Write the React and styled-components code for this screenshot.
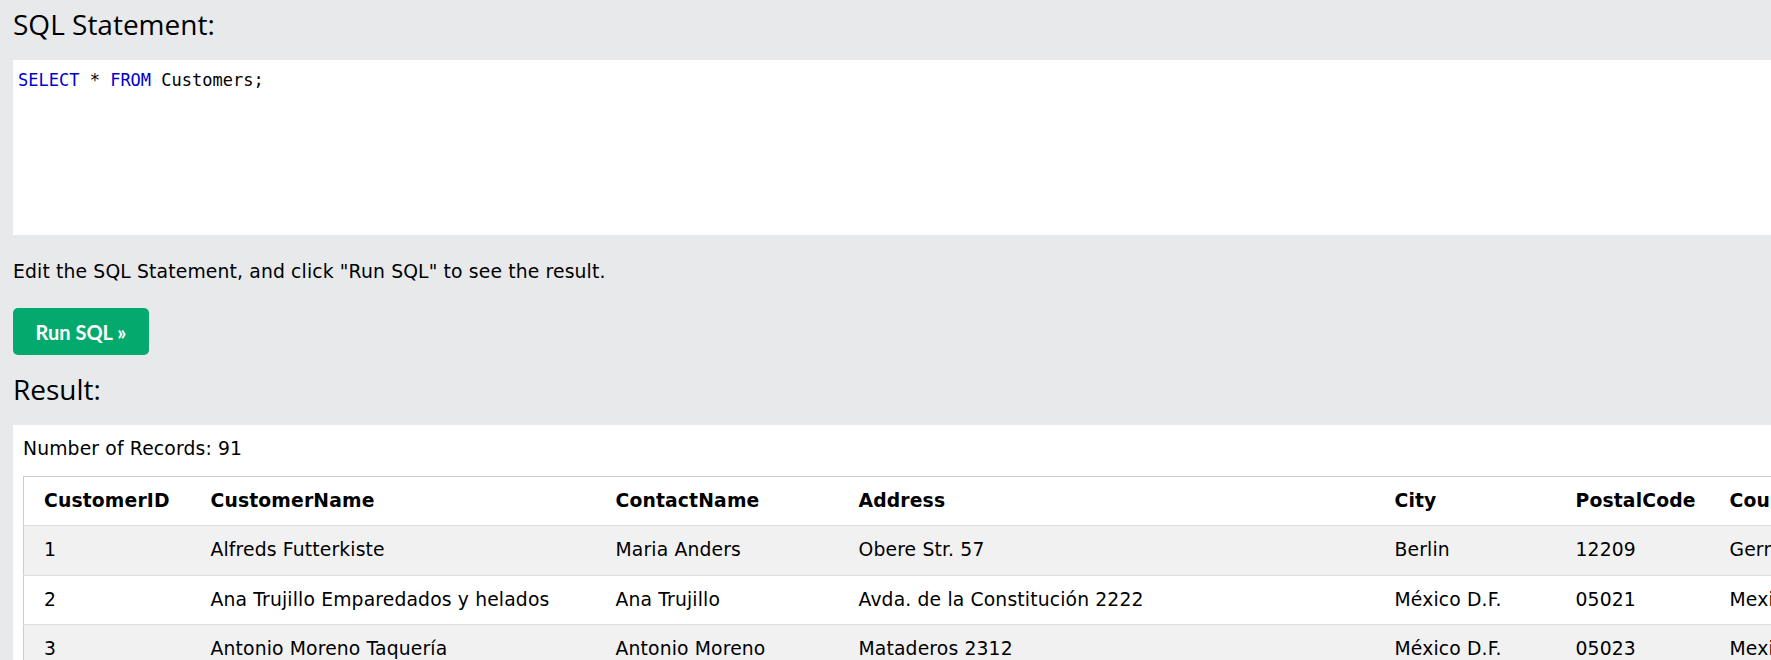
import React from "react";
import styled, { createGlobalStyle } from "styled-components";

const GlobalStyle = createGlobalStyle`
  html, body {
    margin: 0;
    padding: 0;
    background-color: #E7E9EB;
    overflow: hidden;
  }
  body {
    font-family: Verdana, "DejaVu Sans", sans-serif;
    font-size: 18.75px;
    line-height: 1.5;
    letter-spacing: 0.15px;
    color: #000;
  }
`;

const columns = [
  { name: "CustomerID", width: 177 },
  { name: "CustomerName", width: 405 },
  { name: "ContactName", width: 243 },
  { name: "Address", width: 536 },
  { name: "City", width: 181 },
  { name: "PostalCode", width: 154 },
  { name: "Country", width: 160 },
];

const rows = [
  ["1", "Alfreds Futterkiste", "Maria Anders", "Obere Str. 57", "Berlin", "12209", "Germany"],
  ["2", "Ana Trujillo Emparedados y helados", "Ana Trujillo", "Avda. de la Constitución 2222", "México D.F.", "05021", "Mexico"],
  ["3", "Antonio Moreno Taquería", "Antonio Moreno", "Mataderos 2312", "México D.F.", "05023", "Mexico"],
  ["4", "Around the Horn", "Thomas Hardy", "120 Hanover Sq.", "London", "WA1 1DP", "UK"],
  ["5", "Berglunds snabbköp", "Christina Berglund", "Berguvsvägen 8", "Luleå", "S-958 22", "Sweden"],
];

export default function App() {
  const tableWidth = columns.reduce((sum, c) => sum + c.width, 0);
  return (
    <>
      <GlobalStyle />
      <Page>
        <Heading>SQL Statement:</Heading>
        <CodeBox>
          <CodeLine>
            <Keyword>SELECT</Keyword> * <Keyword>FROM</Keyword> Customers;
          </CodeLine>
        </CodeBox>
        <Hint>Edit the SQL Statement, and click "Run SQL" to see the result.</Hint>
        <RunButton type="button">Run SQL »</RunButton>
        <Heading $top={20}>Result:</Heading>
        <ResultBox>
          <RecordCount>Number of Records: 91</RecordCount>
          <Table style={{ width: tableWidth }}>
            <colgroup>
              {columns.map((c) => (
                <col key={c.name} style={{ width: c.width }} />
              ))}
            </colgroup>
            <thead>
              <Row>
                {columns.map((c) => (
                  <HeadCell key={c.name}>{c.name}</HeadCell>
                ))}
              </Row>
            </thead>
            <tbody>
              {rows.map((r, i) => (
                <Row key={r[0]} $striped={i % 2 === 0}>
                  {r.map((v, j) => (
                    <Cell key={j}>{v}</Cell>
                  ))}
                </Row>
              ))}
            </tbody>
          </Table>
        </ResultBox>
      </Page>
    </>
  );
}

const Page = styled.div`
  width: 2000px;
  padding-left: 13px;
  box-sizing: border-box;
`;

const Heading = styled.h3`
  margin: ${(p) => p.$top || 10}px 0 21px 0;
  font-family: "Open Sans", "Segoe UI", sans-serif;
  font-weight: 400;
  font-size: 28px;
  line-height: 29px;
  letter-spacing: 0;
  color: #000;
`;

const CodeBox = styled.div`
  height: 175px;
  background-color: #fff;
  padding: 10px 5px;
  box-sizing: border-box;
`;

const CodeLine = styled.div`
  font-family: "DejaVu Sans Mono", "Liberation Mono", monospace;
  font-size: 17px;
  line-height: 20.5px;
  letter-spacing: 0;
  color: #000;
  white-space: pre;
`;

const Keyword = styled.span`
  color: #0000CD;
`;

const Hint = styled.p`
  margin: 23px 0 22px 0;
`;

const RunButton = styled.button`
  display: inline-flex;
  align-items: center;
  justify-content: center;
  width: 136px;
  height: 47px;
  padding: 0;
  border: none;
  border-radius: 5px;
  background-color: #04AA6D;
  color: #fff;
  font-family: Lato, "Open Sans", sans-serif;
  font-weight: 700;
  font-size: 20px;
  letter-spacing: 0;
  cursor: pointer;
`;

const ResultBox = styled.div`
  background-color: #fff;
  padding: 10px 10px 20px 10px;
`;

const RecordCount = styled.div`
  margin: 0 0 13px 0;
`;

const Table = styled.table`
  table-layout: fixed;
  border-collapse: collapse;
  border: 1px solid #ccc;
`;

const Row = styled.tr`
  border-bottom: 1px solid #ddd;
  background-color: ${(p) => (p.$striped ? "#f1f1f1" : "#fff")};
`;

const HeadCell = styled.th`
  text-align: left;
  font-weight: bold;
  padding: 10px;
  white-space: nowrap;
  overflow: hidden;
  &:first-child {
    padding-left: 20px;
  }
`;

const Cell = styled.td`
  padding: 10px;
  white-space: nowrap;
  overflow: hidden;
  &:first-child {
    padding-left: 20px;
  }
`;
